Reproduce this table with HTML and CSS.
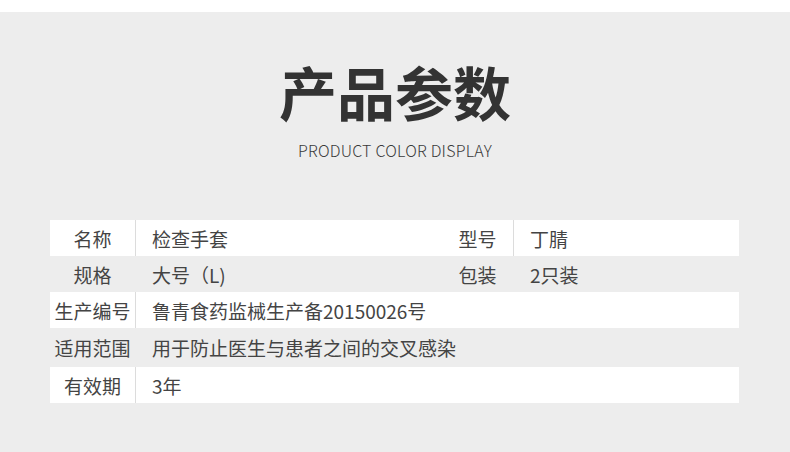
FILE: index.html
```html
<!DOCTYPE html>
<html lang="zh-CN">
<head>
<meta charset="utf-8">
<title>产品参数</title>
<link rel="stylesheet" href="styles.css">
</head>
<body>
<div class="topbar"></div>
<header class="header">
  <h1 class="title">产品参数</h1>
  <p class="subtitle">PRODUCT COLOR DISPLAY</p>
</header>
<section class="table">
  <div class="row row-white">
    <div class="label">名称</div>
    <div class="value value-half">检查手套</div>
    <div class="label label-narrow">型号</div>
    <div class="value">丁腈</div>
  </div>
  <div class="row row-gray">
    <div class="label">规格</div>
    <div class="value value-half">大号（L)</div>
    <div class="label label-narrow">包装</div>
    <div class="value">2只装</div>
  </div>
  <div class="row row-white">
    <div class="label">生产编号</div>
    <div class="value">鲁青食药监械生产备20150026号</div>
  </div>
  <div class="row row-gray row-tall">
    <div class="label">适用范围</div>
    <div class="value">用于防止医生与患者之间的交叉感染</div>
  </div>
  <div class="row row-white">
    <div class="label">有效期</div>
    <div class="value">3年</div>
  </div>
</section>
</body>
</html>
```

FILE: styles.css
```css
* { box-sizing: border-box; }
html, body {
  margin: 0;
  padding: 0;
}
body {
  background: #ededed;
  font-family: "Noto Sans CJK SC", "Noto Sans", sans-serif;
  color: #444444;
  width: 790px;
  height: 452px;
  overflow: hidden;
}
.topbar {
  height: 12px;
  background: #ffffff;
}
.header {
  display: flex;
  flex-direction: column;
  align-items: center;
  padding-top: 50px;
}
.title {
  margin: 0;
  font-size: 58px;
  line-height: 58px;
  font-weight: 700;
  color: #333333;
  letter-spacing: 0;
}
.subtitle {
  margin: 21px 0 0 0;
  font-size: 16px;
  line-height: 18px;
  font-weight: 300;
  color: #3a3a3a;
  letter-spacing: 0.2px;
}
.table {
  margin: 61px 51px 0 50px;
  display: flex;
  flex-direction: column;
}
.row {
  display: flex;
  height: 36px;
  align-items: stretch;
  font-size: 19px;
}
.row-tall { height: 39px; }
.row-white { background: #ffffff; }
.row-gray { background: #ededed; }
.label {
  width: 86px;
  flex: none;
  display: flex;
  align-items: center;
  justify-content: center;
  border-right: 1px solid transparent;
}
.row-white .label { border-right-color: #dcdcdc; }
.label-narrow { width: 72px; }
.value {
  flex: 1;
  display: flex;
  align-items: center;
  padding-left: 16px;
}
.value-half {
  flex: none;
  width: 306px;
}
```
